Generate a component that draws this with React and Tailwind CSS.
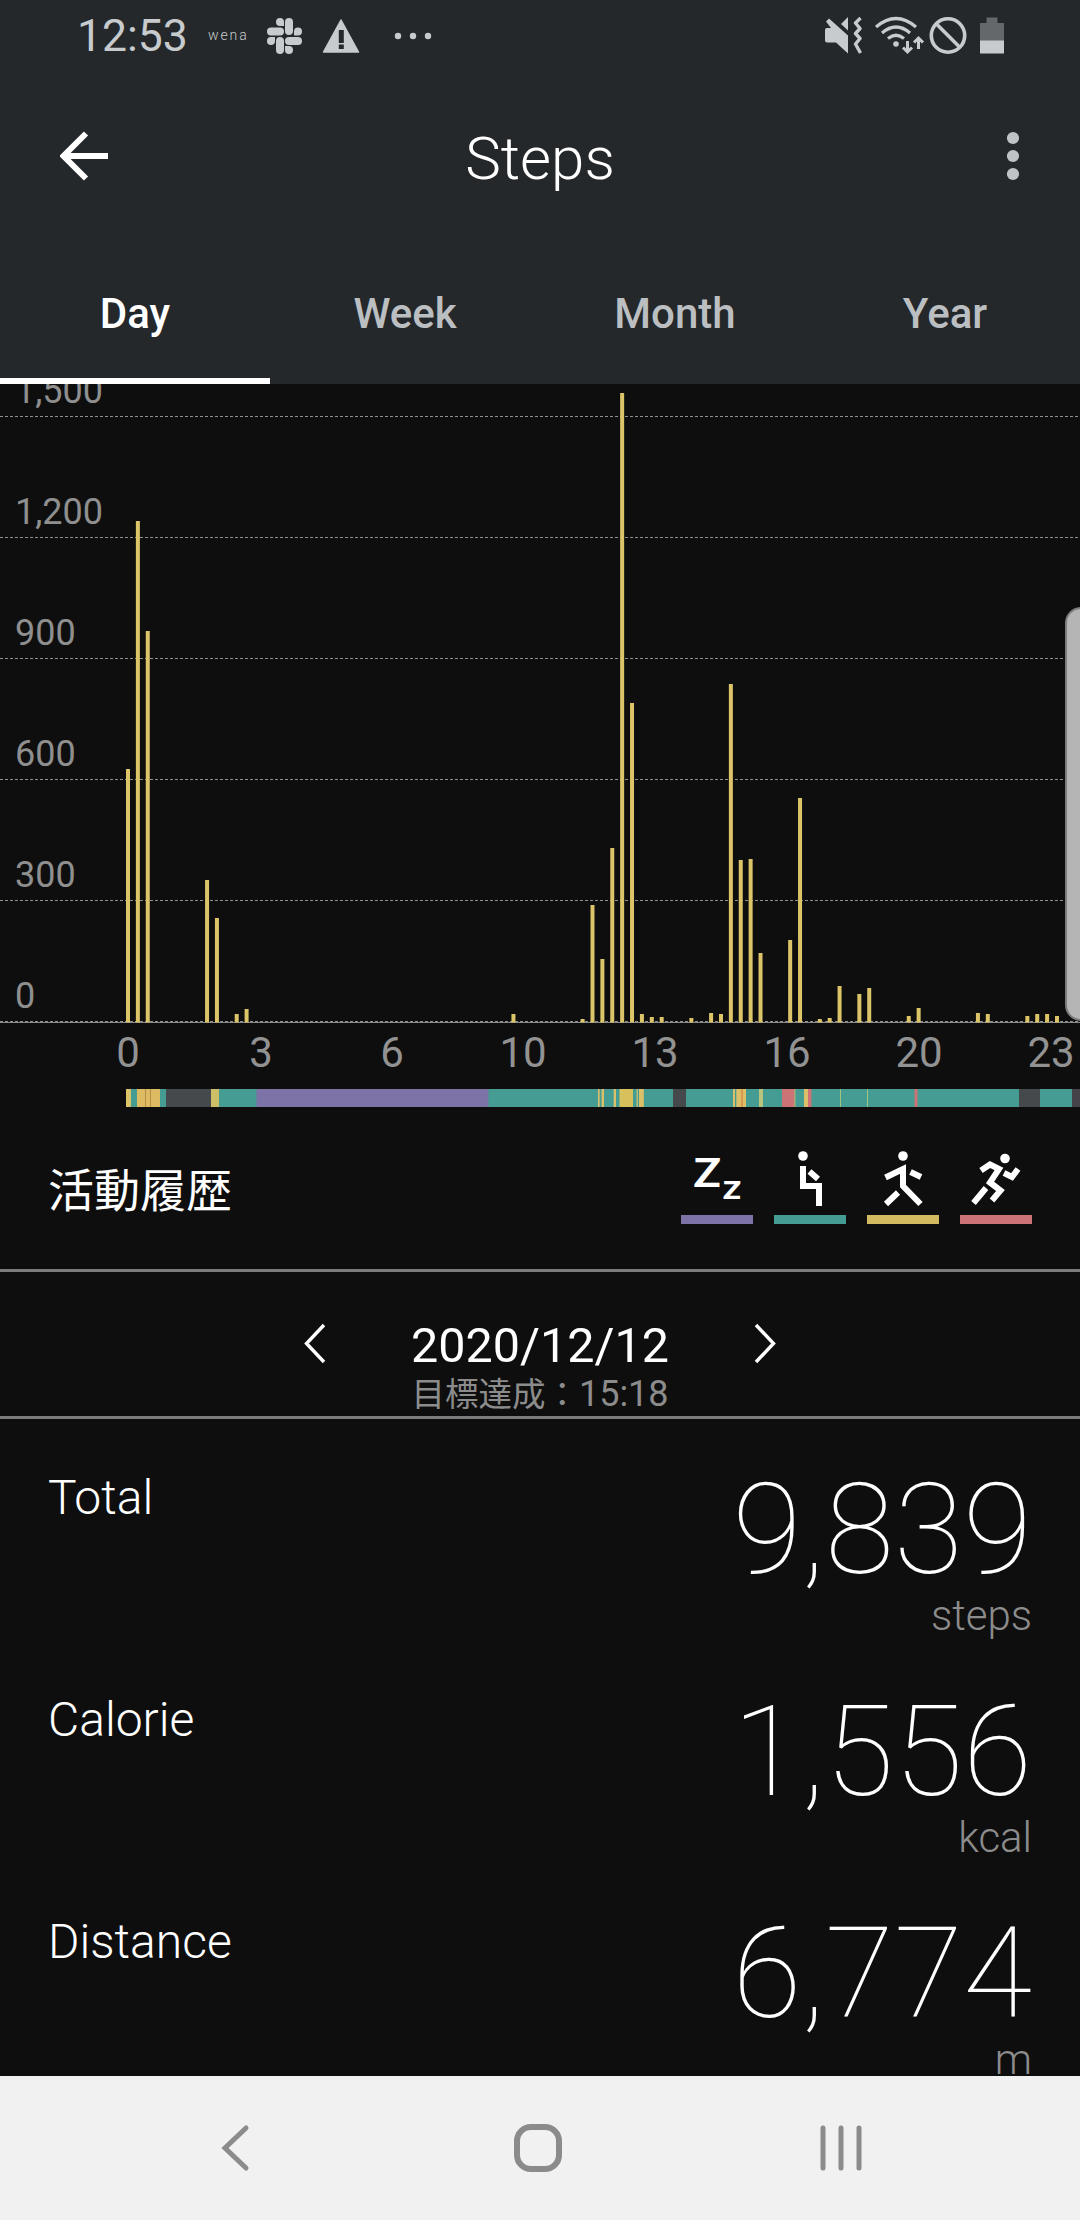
const YELLOW = "#dcc069";
const TEAL = "#459c93";
const PURPLE = "#7e73a6";
const RED = "#cc7375";
const GRAY = "#46494c";

// [slot index, y of the bar's top]
const bars = [
  [0, 769], [1, 521], [2, 631], [8, 880], [9, 918], [11, 1014], [12, 1009],
  [39, 1014], [46, 1019], [47, 905], [48, 959], [49, 848], [50, 393], [51, 703],
  [52, 1014], [53, 1017], [54, 1017], [57, 1018], [59, 1013], [60, 1014],
  [61, 684], [62, 860], [63, 859], [64, 953], [67, 940], [68, 798], [70, 1019],
  [71, 1018], [72, 986], [74, 994], [75, 988], [79, 1016], [80, 1008],
  [86, 1013], [87, 1014], [91, 1016], [92, 1014], [93, 1014], [94, 1016],
];

const grid = [
  [416.5, "1,500"], [537.5, "1,200"], [658.5, "900"],
  [779.5, "600"], [900.5, "300"], [1021.5, "0"],
];

const hours = [
  [128, "0"], [261, "3"], [392, "6"], [523, "10"],
  [655, "13"], [787, "16"], [919, "20"], [1051, "23"],
];

// [start, end, colour] of every activity period
const periods = [
  [126, 1072, TEAL], [126, 131, "#d9c46a"], [137, 160, "#dcbb63"], [145, 145.7, "#a77a3c"],
  [150, 150.7, "#a77a3c"], [166, 211, GRAY], [211, 219, "#cdbf68"], [256.5, 488.5, PURPLE],
  [598, 599.6, YELLOW], [601.6, 604, YELLOW], [613.7, 616, YELLOW], [619.5, 633, "#d8c05c"],
  [636.6, 637.8, YELLOW], [639, 643.8, YELLOW], [673, 686, GRAY], [733, 735, YELLOW],
  [736.3, 746, YELLOW], [741, 743, "#d99a4c"], [759, 763, "#b9c47c"], [782, 794.5, RED],
  [794.5, 795.3, YELLOW], [804, 808, YELLOW], [808, 811.5, RED], [840, 841, "#a0c47c"],
  [867, 868, "#a0c47c"], [914.5, 917.5, RED], [1019, 1040, GRAY], [1072, 1080, "#454349"],
];

function StatusBar() {
  return (
    <div className="flex h-[72px] items-center pl-[77px] text-[#c8cbcd]">
      <span className="w-[110px] text-[44.5px] leading-none">12:53</span>
      <span className="ml-[21px] mt-[-2px] w-[44px] text-[14px] font-light leading-none tracking-[1.9px]">wena</span>
      <svg className="ml-[14px]" width="37" height="38" viewBox="0 0 37 38" fill="currentColor">
        <rect x="19" y="1" width="8" height="17" rx="4" />
        <rect x="1" y="10.500" width="17" height="8" rx="4" />
        <rect x="10" y="20" width="8" height="17" rx="4" />
        <rect x="19" y="20" width="17" height="8" rx="4" />
        <path d="M18 9H14A4 4 0 1 1 18 5Z" />
        <path d="M28 18.500V14.500A4 4 0 1 1 32 18.500Z" />
        <path d="M19 29H23A4 4 0 1 1 19 33Z" />
        <path d="M9 20V24A4 4 0 1 1 5 20Z" />
      </svg>
      <svg className="ml-[19px]" width="38" height="36" viewBox="0 0 38 36">
        <path d="M19 2L36.500 34H1.500Z" fill="currentColor" stroke="currentColor" strokeWidth="1.500" strokeLinejoin="round" />
        <path d="M19.300 12V25M19.300 26.500V31" stroke="#24282b" strokeWidth="5" />
      </svg>
      <svg className="ml-[34px]" width="38" height="8" viewBox="0 0 38 8" fill="currentColor">
        <circle cx="4" cy="4" r="3.200" /><circle cx="19" cy="4" r="3.200" /><circle cx="34" cy="4" r="3.200" />
      </svg>
      <div className="ml-auto mr-[76px] flex items-center">
        <svg width="38" height="40" viewBox="0 0 38 40" fill="none" stroke="currentColor">
          <path d="M1 14Q1 12 3 12H7L2 5.500L5 2.500L24 19.500V37.500L12 26.500H3Q1 26.500 1 24.500Z" fill="currentColor" stroke="none" />
          <path d="M24 1V14.500L17 8Z" fill="currentColor" stroke="none" />
          <path d="M36.500 2L31.500 7L36 12.500L31.500 17.500L36 22.500L31.500 28L36.500 37" strokeWidth="3.400" strokeLinejoin="round" />
        </svg>
        <svg className="ml-[13px]" width="50" height="40" viewBox="0 0 50 40" fill="none" stroke="currentColor" strokeWidth="3.200">
          <path d="M1 11Q21 -6 41 11M7 17Q21 5 35 17M13 22.500Q21 16 29 22.500" />
          <circle cx="21" cy="28" r="2.800" fill="currentColor" stroke="none" />
          <path d="M32.500 25V36M28 31.500L32.500 36L37 31.500M43.500 33V22M39 26.500L43.500 22L48 26.500" strokeWidth="3" />
        </svg>
        <svg className="ml-[4px]" width="38" height="40" viewBox="0 0 38 40" fill="none" stroke="currentColor" strokeWidth="3.600">
          <circle cx="19" cy="19.500" r="16.700" /><path d="M7.500 8L31 31.500" />
        </svg>
        <svg className="ml-[13px]" width="24" height="40" viewBox="0 0 24 40">
          <path d="M6.500 1.500H17.500V7H24V25H0V7H6.500Z" fill="#64686a" />
          <path d="M0 24.500H24V37.500H0Z" fill="currentColor" />
        </svg>
      </div>
    </div>
  );
}

function TitleBar() {
  return (
    <div className="grid h-[168px] grid-cols-[50px_1fr_50px] items-center px-[60px]">
      <svg width="50" height="50" viewBox="0 0 50 50" fill="none" stroke="white" strokeWidth="6">
        <path d="M26 2.500L3.500 25L26 47.500M3.500 25H48" />
      </svg>
      <h1 className="mt-[5px] text-center text-[60px] font-light leading-none text-white">Steps</h1>
      <svg className="ml-auto" width="14" height="50" viewBox="0 0 14 50" fill="#c0c3c5">
        <circle cx="7" cy="7" r="6.100" /><circle cx="7" cy="25" r="6.100" /><circle cx="7" cy="43" r="6.100" />
      </svg>
    </div>
  );
}

function Tabs() {
  return (
    <div className="grid h-[144px] grid-cols-4 text-center text-[42px] font-medium leading-[148px] text-[#bcbfc1]">
      <div className="h-[144px] border-b-[6px] border-white text-white">Day</div>
      <div className="h-[144px]">Week</div>
      <div className="h-[144px]">Month</div>
      <div className="h-[144px]">Year</div>
    </div>
  );
}

function Chart() {
  return (
    <svg className="block" width="1080" height="733" viewBox="0 384 1080 733" fontFamily="Roboto, sans-serif">
      {grid.map(([y, label]) => (
        <g key={label}>
          <path d={`M0 ${y}H1080`} stroke="#919191" strokeDasharray="3 2" />
          <text x="15" y={y - 13.5} fontSize="36" fill="#8f8f8f">{label}</text>
        </g>
      ))}
      <path d="M0 1022.500H1080" stroke="#8a8a8a" />
      {bars.map(([slot, top]) => (
        <rect key={slot} x={126 + slot * 9.883} y={top} width="4" height={1022.5 - top} fill="#dcc468" />
      ))}
      {hours.map(([x, label]) => (
        <text key={label} x={x} y="1067" fontSize="42" fill="#929292" textAnchor="middle">{label}</text>
      ))}
      {periods.map(([from, to, color]) => (
        <rect key={`${from}-${to}`} x={from} y="1089" width={to - from} height="18" fill={color} />
      ))}
    </svg>
  );
}

function Legend() {
  const icon = "block h-[66px] w-[72px]";
  return (
    <div className="flex h-[155px] items-start border-b-[3px] border-[#7c7c7c] pl-12 pr-12">
      <h2 className="mt-[41px] text-[46px] leading-[66px] text-white">活動履歴</h2>
      <div className="ml-auto mt-8 flex gap-[21px]">
        <div className="border-b-[9px] border-[#7e73a6]">
          <svg className={icon} viewBox="681 1149 72 66" fill="white" fontFamily="Lato, sans-serif" fontWeight="700">
            <text x="693.500" y="1187" fontSize="39.500" textLength="27.500" lengthAdjust="spacingAndGlyphs">Z</text>
            <text x="722.500" y="1199" fontSize="34" textLength="19" lengthAdjust="spacingAndGlyphs">z</text>
          </svg>
        </div>
        <div className="border-b-[9px] border-[#459c93]">
          <svg className={icon} viewBox="774 1149 72 66" fill="none" stroke="white" strokeWidth="6">
            <circle cx="803" cy="1156" r="4.800" fill="white" stroke="none" />
            <path d="M803 1166V1186H819V1206M809.500 1171.500L818 1179" />
          </svg>
        </div>
        <div className="border-b-[9px] border-[#d3b95f]">
          <svg className={icon} viewBox="867 1149 72 66" fill="none" stroke="white" strokeWidth="6">
            <circle cx="903" cy="1156" r="4.800" fill="white" stroke="none" />
            <path d="M885.500 1177.500L903 1169V1186L920.500 1204M910.500 1172L921 1177M898 1192.500L886 1204" />
          </svg>
        </div>
        <div className="border-b-[9px] border-[#cc7375]">
          <svg className={icon} viewBox="960 1149 72 66" fill="none" stroke="white" strokeWidth="6">
            <circle cx="1005" cy="1158.500" r="4.800" fill="white" stroke="none" />
            <path d="M981 1170.500L990 1164.500L999 1169L990 1182.500L1000.500 1190.500L992 1200.500M1004 1173L1012 1177L1018 1169M986 1188L973.500 1203" />
          </svg>
        </div>
      </div>
    </div>
  );
}

function DatePicker() {
  return (
    <div className="flex h-[147px] items-start justify-center border-b-[3px] border-[#7c7c7c] pt-[35px]">
      <svg width="22" height="74" viewBox="0 0 22 74" fill="none" stroke="white" strokeWidth="3.400">
        <path d="M20 18L2.500 36.500L20 55" />
      </svg>
      <div className="w-[428px] pt-[14px] text-center">
        <div className="text-[48.5px] leading-[50px] text-white">2020/12/12</div>
        <div className="mt-[3px] text-[36px] leading-[40px] text-[#8c8c8c]">
          <span className="text-[33.5px]">目標達成：</span>15:18
        </div>
      </div>
      <svg width="22" height="74" viewBox="0 0 22 74" fill="none" stroke="white" strokeWidth="3.400">
        <path d="M2 18L19.500 36.500L2 55" />
      </svg>
    </div>
  );
}

function Stat({ label, value, unit }) {
  return (
    <div className="flex h-[222px] items-start justify-between pl-12 pr-12">
      <div className="mt-[5px] text-[48px] font-light leading-[56px] text-white">{label}</div>
      <div className="text-right">
        <div className="text-[126px] font-thin leading-[130px] text-white">{value}</div>
        <div className="text-[42px] font-light leading-[42px] text-[#8c8c8c]">{unit}</div>
      </div>
    </div>
  );
}

function NavBar() {
  return (
    <div className="flex h-[144px] shrink-0 items-center bg-[#f1f1f1] pl-[220px] text-[#8b8b8b]">
      <svg width="30" height="50" viewBox="0 0 30 50" fill="none" stroke="currentColor" strokeWidth="5" strokeLinecap="round">
        <path d="M26 5L5 25L26 45" />
      </svg>
      <svg className="ml-[263px]" width="50" height="50" viewBox="0 0 50 50" fill="none" stroke="currentColor" strokeWidth="6">
        <rect x="4" y="4" width="42" height="42" rx="14" />
      </svg>
      <svg className="ml-[256px]" width="44" height="50" viewBox="0 0 44 50" stroke="currentColor" strokeWidth="5" strokeLinecap="round">
        <path d="M4 5V45M22 5V45M40 5V45" />
      </svg>
    </div>
  );
}

export default function App() {
  return (
    <div className="relative flex h-[2220px] w-[1080px] flex-col overflow-hidden bg-[#0e0e0e] font-[Roboto,'Noto_Sans_CJK_JP',sans-serif]">
      <header className="h-[384px] shrink-0 bg-[#24282b]">
        <StatusBar />
        <TitleBar />
        <Tabs />
      </header>
      <main className="h-[1692px] shrink-0 overflow-hidden">
        <Chart />
        <Legend />
        <DatePicker />
        <div className="pt-[46px]">
          <Stat label="Total" value="9,839" unit="steps" />
          <Stat label="Calorie" value="1,556" unit="kcal" />
          <Stat label="Distance" value="6,774" unit="m" />
        </div>
      </main>
      <NavBar />
      <div className="absolute right-[-4px] top-[607px] h-[414px] w-[19px] rounded-l-[16px] border-2 border-[#7d7d7d] bg-[#b5b5b5]" />
    </div>
  );
}
